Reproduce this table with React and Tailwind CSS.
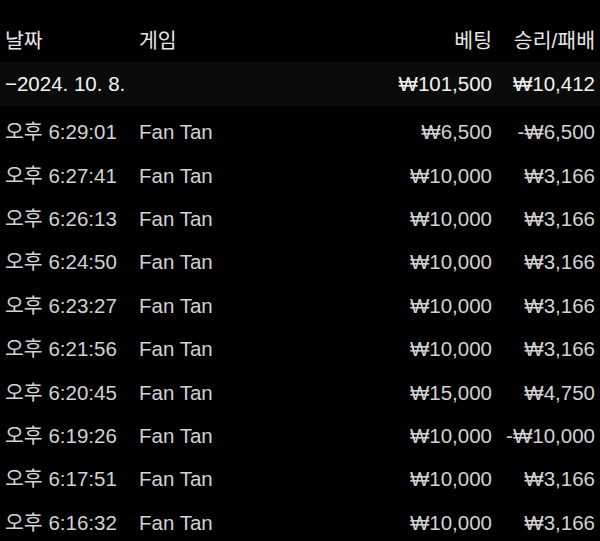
import React from "react";

const rows = [
  { time: "오후 6:29:01", bet: "₩6,500", result: "-₩6,500" },
  { time: "오후 6:27:41", bet: "₩10,000", result: "₩3,166" },
  { time: "오후 6:26:13", bet: "₩10,000", result: "₩3,166" },
  { time: "오후 6:24:50", bet: "₩10,000", result: "₩3,166" },
  { time: "오후 6:23:27", bet: "₩10,000", result: "₩3,166" },
  { time: "오후 6:21:56", bet: "₩10,000", result: "₩3,166" },
  { time: "오후 6:20:45", bet: "₩15,000", result: "₩4,750" },
  { time: "오후 6:19:26", bet: "₩10,000", result: "-₩10,000" },
  { time: "오후 6:17:51", bet: "₩10,000", result: "₩3,166" },
  { time: "오후 6:16:32", bet: "₩10,000", result: "₩3,166" },
];

const App = () => {
  return (
    <div
      className="w-[600px] h-[541px] overflow-hidden bg-black text-[20.5px] pt-[21px]"
      style={{ fontFamily: '"Liberation Sans", "Noto Sans CJK KR", sans-serif' }}
    >
      {/* Header */}
      <div className="flex items-center h-[41px] px-[5px] text-[#e6e6e6]">
        <div className="w-[134px]">날짜</div>
        <div className="flex-1">게임</div>
        <div className="text-right">베팅</div>
        <div className="w-[103px] text-right">승리/패배</div>
      </div>

      {/* Date group */}
      <div className="flex items-center h-[44px] px-[5px] bg-[#0b0b0b] text-[#f2f2f2]">
        <div className="flex-1">−2024. 10. 8.</div>
        <div className="text-right">₩101,500</div>
        <div className="w-[103px] text-right">₩10,412</div>
      </div>

      <div className="pt-[5px]">
        {rows.map((r, i) => (
          <div key={i} className="flex items-center h-[43.4px] px-[5px] text-[#d2d2d2]">
            <div className="w-[134px]">{r.time}</div>
            <div className="flex-1">Fan Tan</div>
            <div className="text-right">{r.bet}</div>
            <div className="w-[103px] text-right">{r.result}</div>
          </div>
        ))}
      </div>
    </div>
  );
};

export default App;
